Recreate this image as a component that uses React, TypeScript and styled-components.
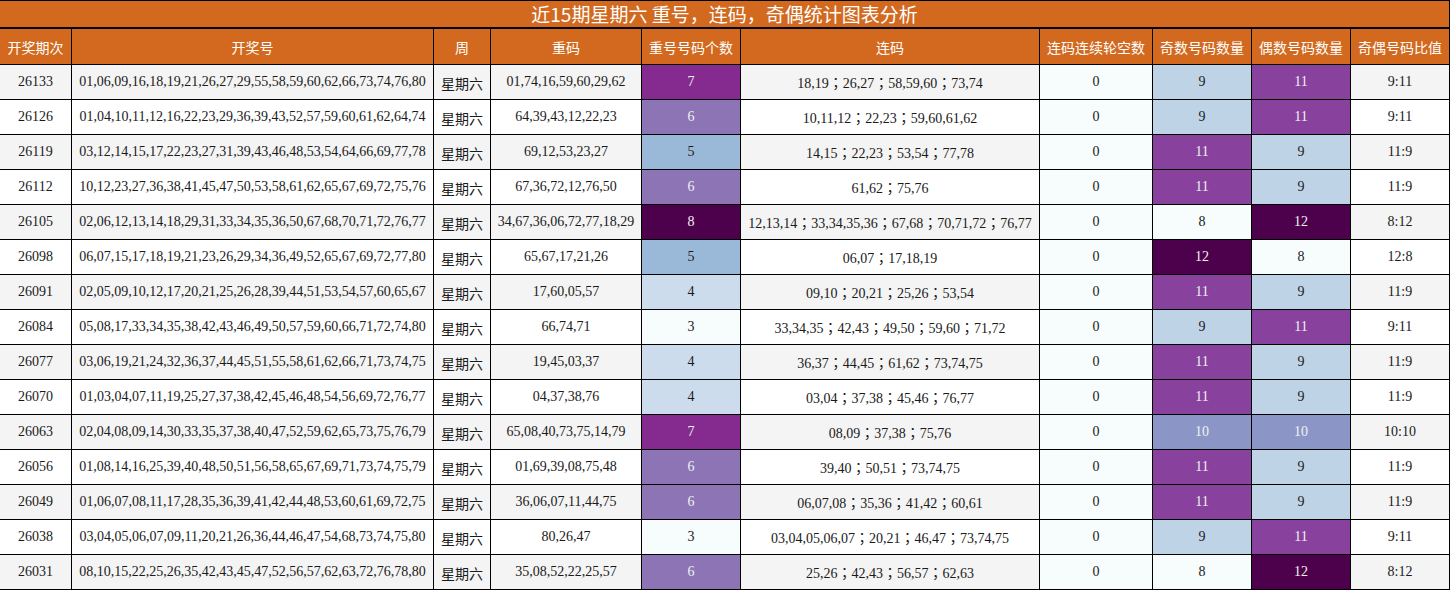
import React from "react";
import styled, { createGlobalStyle } from "styled-components";

const GlobalStyle = createGlobalStyle`
  html, body { margin: 0; padding: 0; background: #ffffff; }
  * { box-sizing: border-box; }
`;

const ORANGE = "#D2691E";
const COLS = [71, 361, 56, 150, 98, 298, 112, 98, 98, 98];
const HEADERS = [
  "开奖期次",
  "开奖号",
  "周",
  "重码",
  "重号号码个数",
  "连码",
  "连码连续轮空数",
  "奇数号码数量",
  "偶数号码数量",
  "奇偶号码比值",
];

type Row = {
  issue: string;
  nums: string;
  repeat: string;
  repeatCount: number;
  runs: string;
  gap: number;
  odd: number;
  even: number;
};

const ROWS: Row[] = [
  { issue: "26133", nums: "01,06,09,16,18,19,21,26,27,29,55,58,59,60,62,66,73,74,76,80", repeat: "01,74,16,59,60,29,62", repeatCount: 7, runs: "18,19；26,27；58,59,60；73,74", gap: 0, odd: 9, even: 11 },
  { issue: "26126", nums: "01,04,10,11,12,16,22,23,29,36,39,43,52,57,59,60,61,62,64,74", repeat: "64,39,43,12,22,23", repeatCount: 6, runs: "10,11,12；22,23；59,60,61,62", gap: 0, odd: 9, even: 11 },
  { issue: "26119", nums: "03,12,14,15,17,22,23,27,31,39,43,46,48,53,54,64,66,69,77,78", repeat: "69,12,53,23,27", repeatCount: 5, runs: "14,15；22,23；53,54；77,78", gap: 0, odd: 11, even: 9 },
  { issue: "26112", nums: "10,12,23,27,36,38,41,45,47,50,53,58,61,62,65,67,69,72,75,76", repeat: "67,36,72,12,76,50", repeatCount: 6, runs: "61,62；75,76", gap: 0, odd: 11, even: 9 },
  { issue: "26105", nums: "02,06,12,13,14,18,29,31,33,34,35,36,50,67,68,70,71,72,76,77", repeat: "34,67,36,06,72,77,18,29", repeatCount: 8, runs: "12,13,14；33,34,35,36；67,68；70,71,72；76,77", gap: 0, odd: 8, even: 12 },
  { issue: "26098", nums: "06,07,15,17,18,19,21,23,26,29,34,36,49,52,65,67,69,72,77,80", repeat: "65,67,17,21,26", repeatCount: 5, runs: "06,07；17,18,19", gap: 0, odd: 12, even: 8 },
  { issue: "26091", nums: "02,05,09,10,12,17,20,21,25,26,28,39,44,51,53,54,57,60,65,67", repeat: "17,60,05,57", repeatCount: 4, runs: "09,10；20,21；25,26；53,54", gap: 0, odd: 11, even: 9 },
  { issue: "26084", nums: "05,08,17,33,34,35,38,42,43,46,49,50,57,59,60,66,71,72,74,80", repeat: "66,74,71", repeatCount: 3, runs: "33,34,35；42,43；49,50；59,60；71,72", gap: 0, odd: 9, even: 11 },
  { issue: "26077", nums: "03,06,19,21,24,32,36,37,44,45,51,55,58,61,62,66,71,73,74,75", repeat: "19,45,03,37", repeatCount: 4, runs: "36,37；44,45；61,62；73,74,75", gap: 0, odd: 11, even: 9 },
  { issue: "26070", nums: "01,03,04,07,11,19,25,27,37,38,42,45,46,48,54,56,69,72,76,77", repeat: "04,37,38,76", repeatCount: 4, runs: "03,04；37,38；45,46；76,77", gap: 0, odd: 11, even: 9 },
  { issue: "26063", nums: "02,04,08,09,14,30,33,35,37,38,40,47,52,59,62,65,73,75,76,79", repeat: "65,08,40,73,75,14,79", repeatCount: 7, runs: "08,09；37,38；75,76", gap: 0, odd: 10, even: 10 },
  { issue: "26056", nums: "01,08,14,16,25,39,40,48,50,51,56,58,65,67,69,71,73,74,75,79", repeat: "01,69,39,08,75,48", repeatCount: 6, runs: "39,40；50,51；73,74,75", gap: 0, odd: 11, even: 9 },
  { issue: "26049", nums: "01,06,07,08,11,17,28,35,36,39,41,42,44,48,53,60,61,69,72,75", repeat: "36,06,07,11,44,75", repeatCount: 6, runs: "06,07,08；35,36；41,42；60,61", gap: 0, odd: 11, even: 9 },
  { issue: "26038", nums: "03,04,05,06,07,09,11,20,21,26,36,44,46,47,54,68,73,74,75,80", repeat: "80,26,47", repeatCount: 3, runs: "03,04,05,06,07；20,21；46,47；73,74,75", gap: 0, odd: 9, even: 11 },
  { issue: "26031", nums: "08,10,15,22,25,26,35,42,43,45,47,52,56,57,62,63,72,76,78,80", repeat: "35,08,52,22,25,57", repeatCount: 6, runs: "25,26；42,43；56,57；62,63", gap: 0, odd: 8, even: 12 },
];

const REPEAT_COLORS: Record<number, [string, boolean]> = {
  3: ["#f7fcfd", false],
  4: ["#ccdcec", false],
  5: ["#9ab8d8", false],
  6: ["#8c74b5", true],
  7: ["#852b90", true],
  8: ["#4d004b", true],
};

const PARITY_COLORS: Record<number, [string, boolean]> = {
  8: ["#f7fcfd", false],
  9: ["#bfd3e6", false],
  10: ["#8c96c6", true],
  11: ["#88419d", true],
  12: ["#4d004b", true],
};

const Sheet = styled.div`
  width: 1450px;
  border-top: 1px solid #000;
  border-right: 1px solid #000;
  background: #000;
`;

const Title = styled.div`
  height: 26px;
  background: ${ORANGE};
  color: #ffffff;
  font-family: "Noto Sans CJK SC", "Noto Sans", sans-serif;
  font-size: 19px;
  line-height: 26px;
  text-align: center;
  border-bottom: 2px solid #000;
  box-sizing: content-box;
`;

const Grid = styled.div`
  display: grid;
  grid-template-columns: ${COLS.map((c) => `${c}px`).join(" ")};
  grid-template-rows: 35px repeat(15, 34px);
  gap: 1px;
  padding-bottom: 1px;
  background: #000;
`;

const HeadCell = styled.div`
  background: ${ORANGE};
  color: #ffffff;
  font-family: "Noto Sans CJK SC", "Noto Sans", sans-serif;
  font-size: 14px;
  display: flex;
  align-items: center;
  justify-content: center;
  white-space: nowrap;
  overflow: hidden;
`;

const Cell = styled.div<{ $bg: string; $light?: boolean }>`
  background: ${(p) => p.$bg};
  color: ${(p) => (p.$light ? "#f1f1f1" : "#1a1a1a")};
  font-family: "Liberation Serif", "Noto Sans CJK TC", serif;
  font-size: 14px;
  display: flex;
  align-items: center;
  justify-content: center;
  white-space: nowrap;
  overflow: hidden;
`;

const WeekText = styled.span`
  font-family: "Noto Sans CJK SC", sans-serif;
  padding-top: 2px;
`;

export default function App() {
  return (
    <>
      <GlobalStyle />
      <Sheet>
        <Title>近15期星期六 重号，连码，奇偶统计图表分析</Title>
        <Grid>
          {HEADERS.map((h) => (
            <HeadCell key={h}>{h}</HeadCell>
          ))}
          {ROWS.map((r, i) => {
            const stripe = i % 2 === 0 ? "#f4f4f4" : "#ffffff";
            const [rc, rl] = REPEAT_COLORS[r.repeatCount];
            const [oc, ol] = PARITY_COLORS[r.odd];
            const [ec, el] = PARITY_COLORS[r.even];
            return (
              <React.Fragment key={r.issue}>
                <Cell $bg={stripe}>{r.issue}</Cell>
                <Cell $bg={stripe}>{r.nums}</Cell>
                <Cell $bg={stripe}>
                  <WeekText>星期六</WeekText>
                </Cell>
                <Cell $bg={stripe}>{r.repeat}</Cell>
                <Cell $bg={rc} $light={rl}>
                  {r.repeatCount}
                </Cell>
                <Cell $bg={stripe}>{r.runs}</Cell>
                <Cell $bg="#f7fcfd">{r.gap}</Cell>
                <Cell $bg={oc} $light={ol}>
                  {r.odd}
                </Cell>
                <Cell $bg={ec} $light={el}>
                  {r.even}
                </Cell>
                <Cell $bg={stripe}>
                  {r.odd}:{r.even}
                </Cell>
              </React.Fragment>
            );
          })}
        </Grid>
      </Sheet>
    </>
  );
}
